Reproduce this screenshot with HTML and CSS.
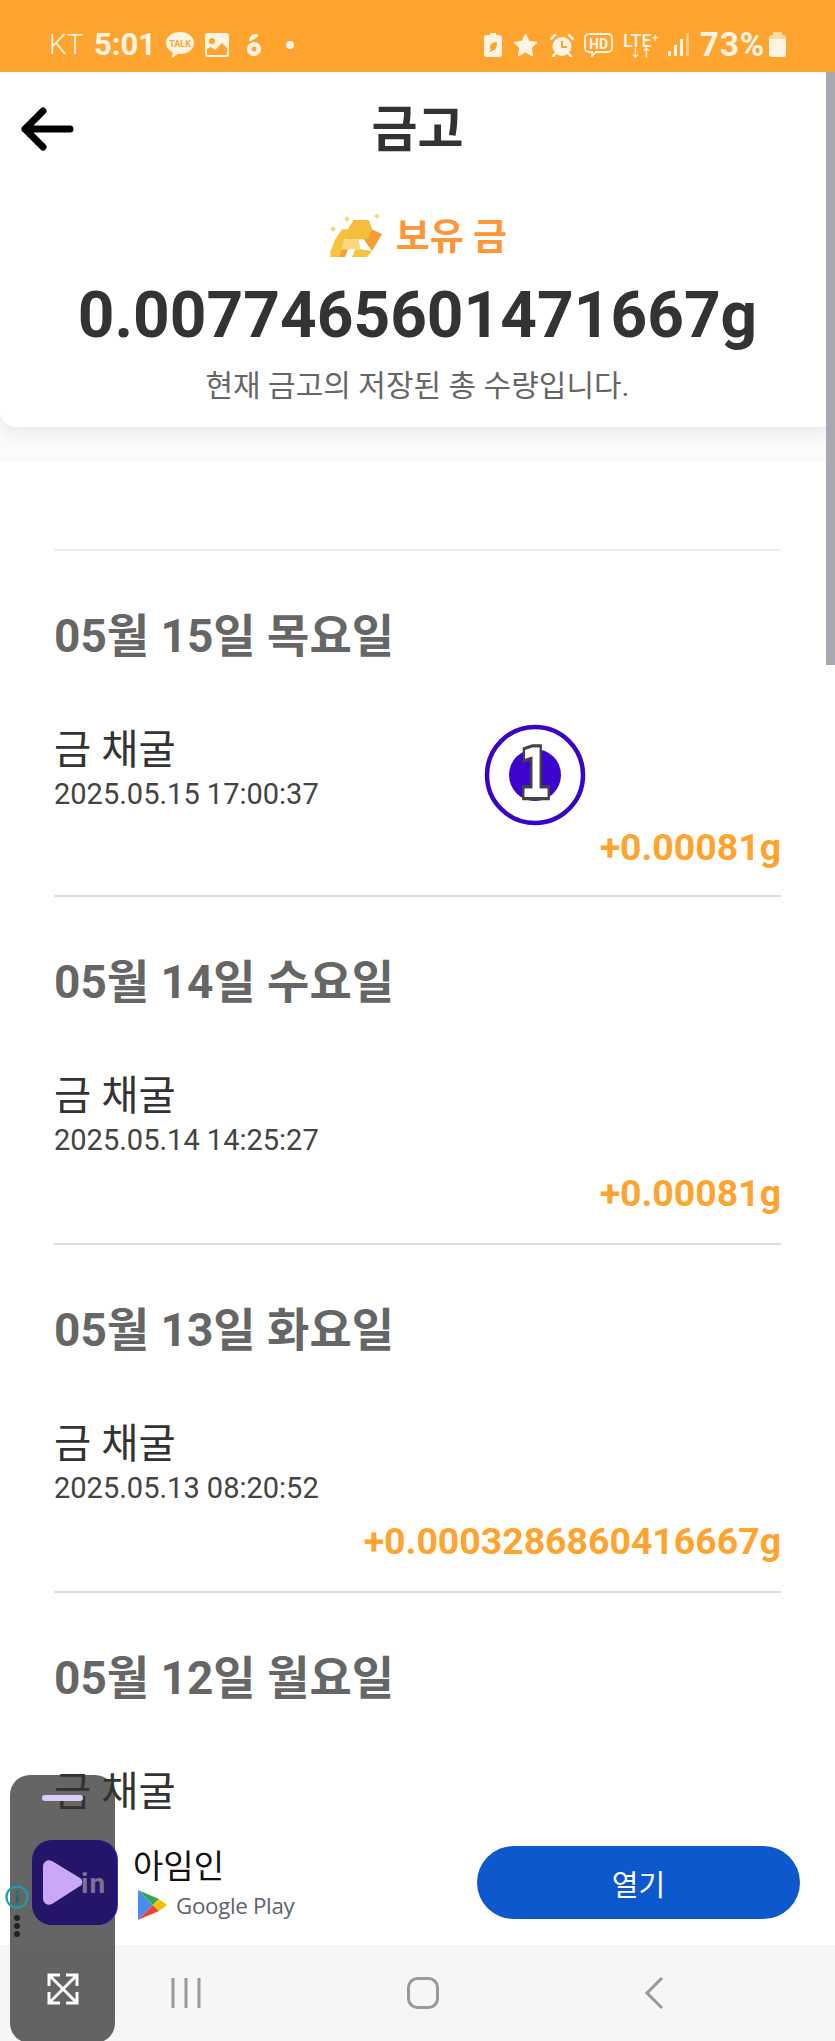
FILE: index.html
```html
<!DOCTYPE html>
<html lang="ko">
<head>
<meta charset="utf-8">
<title>금고</title>
<link rel="stylesheet" href="styles.css">
</head>
<body>
<div class="screen">
  <div class="status">
    <div class="status-left">
      <span class="carrier">KT</span>
      <span class="clock">5:01</span>
      <svg class="ic-talk" width="30" height="28" viewBox="0 0 30 28"><path class="st" d="M15 1C7 1 1 5.700 1 12c0 4 2.600 7.400 6.500 9.300L7 27l6-4.100c.7.100 1.300.100 2 .100 8 0 14-4.700 14-11S23 1 15 1z"/><text class="talk-t" x="15" y="15.500" text-anchor="middle">TALK</text></svg>
      <svg class="ic-img" width="24" height="24" viewBox="0 0 24 24"><path class="st" fill-rule="evenodd" d="M3 0h18a3 3 0 0 1 3 3v18a3 3 0 0 1-3 3H3a3 3 0 0 1-3-3V3a3 3 0 0 1 3-3zM2 16v5a1 1 0 0 0 1 1h18a1 1 0 0 0 1-1v-6l-5-5-7 7-4-3zM7 5a3 3 0 1 0 0 6 3 3 0 0 0 0-6z"/></svg>
      <svg class="ic-drop" width="16" height="24" viewBox="0 0 16 24"><path class="st" fill-rule="evenodd" d="M8 9a7 7 0 1 1 0 14A7 7 0 0 1 8 9zm0 4.500a2.500 2.500 0 1 0 0 5 2.500 2.500 0 0 0 0-5z"/><path class="st" d="M3 7c.5-3 3-6 7-6 2 0 3 1.500 1.500 3L6 7.500C4.500 8.200 2.800 8.200 3 7z"/></svg>
      <span class="dot"></span>
    </div>
    <div class="status-right">
      <svg width="18" height="24" viewBox="0 0 18 24"><path class="st" fill-rule="evenodd" d="M6 0h6v2h3a3 3 0 0 1 3 3v16a3 3 0 0 1-3 3H3a3 3 0 0 1-3-3V5a3 3 0 0 1 3-3h3zM13 9c-4 0-7 2-7 5 0 1 .3 2 1 2.500L5 19h2l1-1.500c3 .5 5-2 5-8.500z"/></svg>
      <svg class="ic-star" width="25" height="24" viewBox="0 0 25 24"><path class="st" stroke="#fff4e4" stroke-width="1.500" stroke-linejoin="round" d="M12.500 1.500l3.300 7 7.700 1-5.600 5.300 1.400 7.700-6.800-3.800-6.800 3.800 1.400-7.700L1.500 9.500l7.700-1z"/></svg>
      <svg class="ic-alarm" width="24" height="24" viewBox="0 0 24 24"><path class="st" fill-rule="evenodd" d="M12 4a9.500 9.500 0 1 1 0 19 9.500 9.500 0 0 1 0-19zm-1 4v7h6v-2h-4V8z"/><path class="ln" d="M1 6l4-4M23 6l-4-4M5 21l-2 2.500M19 21l2 2.500"/></svg>
      <svg class="ic-hd" width="29" height="24" viewBox="0 0 29 24"><path class="ln thin" d="M5 1h19a4 4 0 0 1 4 4v10a4 4 0 0 1-4 4H12l-4 4v-4H5a4 4 0 0 1-4-4V5a4 4 0 0 1 4-4z"/><text class="hd-t" x="14.500" y="15.500" text-anchor="middle">HD</text></svg>
      <div class="lte">
        <span class="lte-t">LTE⁺</span>
        <span class="lte-a">↓↑</span>
      </div>
      <div class="signal"><i class="b1"></i><i class="b2"></i><i class="b3"></i><i class="b4"></i></div>
      <span class="pct">73%</span>
      <span class="batt"></span>
    </div>
  </div>

  <header class="topbar">
    <svg class="back" width="54" height="46" viewBox="0 0 54 46"><path d="M5 23h45M23 5L5 23l18 18" fill="none" stroke="#000" stroke-width="7" stroke-linecap="round" stroke-linejoin="round"/></svg>
    <h1 class="title">금고</h1>
    <div class="bar-slot"></div>
  </header>

  <main class="content">
    <section class="card">
      <div class="card-label">
        <svg class="gold" width="56" height="46" viewBox="0 0 56 46">
          <path d="M19 1q.6 3.400 3.500 4-2.900.6-3.500 4-.6-3.400-3.500-4 2.900-.6 3.500-4z" fill="#f9d478"/>
          <path d="M49 -2q.6 3.400 3.500 4-2.900.6-3.500 4-.6-3.400-3.500-4 2.900-.6 3.500-4z" fill="#f9d478"/>
          <path d="M5 11q.6 3.400 3.500 4-2.900.6-3.500 4-.6-3.400-3.500-4 2.900-.6 3.500-4z" fill="#f9d478"/>
          <path d="M35.700 25.300L40.700 6 44 15.300 54 20.300 44 37z" fill="#f2a032"/>
          <path d="M20.700 13.700L25.700 6H40.700L44 15.300 39 25.300H17.300z" fill="#f7bd3a"/>
          <path d="M14 15.300H24L17.300 25.300 12.300 35.300 1.700 39.300 7.300 25.300z" fill="#f9c03e"/>
          <path d="M15.700 25.300H30.700L32.300 35.300H14z" fill="#fad97c"/>
          <path d="M7.300 25.300H15.700L14 35.300 10.700 43H1.700z" fill="#f9c23f"/>
          <path d="M14 35.300H20L17 43H10.700z" fill="#f2a032"/>
          <path d="M32.300 35.300L44 37 39 43H24L27.300 35.300z" fill="#f9c23f"/>
        </svg>
        <span class="label-text">보유 금</span>
      </div>
      <div class="amount-total">0.0077465601471667g</div>
      <p class="card-note">현재 금고의 저장된 총 수량입니다.</p>
    </section>

    <section class="ledger">
      <article class="day first-line">
        <h2 class="day-title">05월 15일 목요일</h2>
        <div class="item-name">금 채굴</div>
        <div class="item-time">2025.05.15 17:00:37</div>
        <div class="item-amount">+0.00081g</div>
      </article>
      <article class="day">
        <h2 class="day-title">05월 14일 수요일</h2>
        <div class="item-name">금 채굴</div>
        <div class="item-time">2025.05.14 14:25:27</div>
        <div class="item-amount">+0.00081g</div>
      </article>
      <article class="day">
        <h2 class="day-title">05월 13일 화요일</h2>
        <div class="item-name">금 채굴</div>
        <div class="item-time">2025.05.13 08:20:52</div>
        <div class="item-amount">+0.0003286860416667g</div>
      </article>
      <article class="day">
        <h2 class="day-title">05월 12일 월요일</h2>
        <div class="item-name">금 채굴</div>
      </article>
    </section>
  </main>

  <aside class="ad">
    <div class="ad-logo">
      <svg width="85" height="85" viewBox="0 0 85 85"><text class="ad-in" x="49" y="53">in</text><path d="M11 27c0-6 5-8 9-6l28 17c3 2 3 6 0 8L20 64c-4 2-9 0-9-6z" fill="#c9a9f7"/></svg>
    </div>
    <div class="ad-info">
      <div class="ad-name">아임인</div>
      <div class="ad-store">
        <svg width="30" height="32" viewBox="0 0 30 32">
          <path d="M1 1v30l15-15z" fill="#4a8df0"/>
          <path d="M1 1l15 15 6-6z" fill="#35a853"/>
          <path d="M1 31l15-15 6 6z" fill="#ea4335"/>
          <path d="M22 10l8 6-8 6-6-6z" fill="#fbbc04"/>
        </svg>
        <span class="store-name">Google Play</span>
      </div>
    </div>
    <button class="ad-open">열기</button>
  </aside>

  <nav class="softkeys">
    <svg width="30" height="32" viewBox="0 0 30 32"><path d="M2 1v30M15 1v30M28 1v30" stroke="#999" stroke-width="3" fill="none"/></svg>
    <svg width="32" height="32" viewBox="0 0 32 32"><rect x="1.500" y="1.500" width="29" height="29" rx="9" fill="none" stroke="#999" stroke-width="3"/></svg>
    <svg width="20" height="34" viewBox="0 0 20 34"><path d="M18 2L3 17l15 15" fill="none" stroke="#999" stroke-width="3"/></svg>
  </nav>

  <div class="scrollbar"></div>

  <div class="coin">
    <svg width="102" height="102" viewBox="0 0 102 102"><circle cx="51" cy="51" r="48" fill="#fff" stroke="#3a04c4" stroke-width="4.500"/><circle cx="51" cy="51" r="26" fill="#3d04cf"/><text class="coin-t" transform="translate(51 73) scale(.8 1.08)" text-anchor="middle">1</text></svg>
  </div>

  <div class="widget">
    <span class="pill"></span>
    <svg class="expand" width="32" height="32" viewBox="0 0 32 32"><path d="M3 3l26 26M29 3L3 29M2 13V2h11M19 2h11v11M30 19v11H19M13 30H2V19" fill="none" stroke="#fff" stroke-width="3"/></svg>
  </div>
  <svg class="info" width="24" height="24" viewBox="0 0 24 24"><circle cx="12" cy="12" r="10.500" fill="none" stroke="#1a9fae" stroke-width="2.200"/><path d="M12 10v8M12 6v2.500" stroke="#146f7c" stroke-width="2.800"/></svg>
  <div class="dots"><i></i><i></i><i></i></div>
</div>
</body>
</html>
```
FILE: styles.css
```css
* { box-sizing: border-box; }
html, body { margin: 0; padding: 0; background: #fff; }
body { font-family: Roboto, "Noto Sans CJK KR", sans-serif; color: #333; }

.screen {
  position: relative;
  width: 835px;
  height: 2041px;
  overflow: hidden;
  display: flex;
  flex-direction: column;
}

/* status bar */
.status {
  height: 72px;
  flex: none;
  background: #ffa42e;
  color: #fff4e4;
  display: flex;
  justify-content: space-between;
  align-items: center;
  padding: 17px 49px 0 49px;
}
.status-left, .status-right { display: flex; align-items: center; }
.st { fill: #fff4e4; }
.ln { fill: none; stroke: #fff4e4; stroke-width: 2.500; stroke-linecap: round; }
.ln.thin { stroke-width: 1.800; }
.carrier { font-size: 28px; font-weight: 300; width: 45px; }
.clock { font-size: 31px; font-weight: 700; width: 71px; }
.ic-img { margin-left: 10px; }
.ic-drop { margin-left: 17px; }
.dot { width: 8px; height: 8px; border-radius: 50%; background: #fff4e4; margin-left: 24px; }
.talk-t { font: 700 9px Roboto, sans-serif; fill: #ffa42e; }
.hd-t { font: 700 14px Roboto, sans-serif; fill: #fff4e4; }
.ic-star { margin-left: 11px; }
.ic-alarm { margin-left: 12px; }
.ic-hd { margin-left: 10px; }
.lte { margin-left: 9px; width: 38px; display: flex; flex-direction: column; align-items: center; }
.lte-t { font-size: 18px; line-height: 17px; font-weight: 500; }
.lte-a { font-size: 11px; line-height: 9px; font-weight: 700; }
.signal { margin-left: 8px; display: flex; align-items: flex-end; gap: 3px; height: 23px; }
.signal i { display: block; width: 3px; background: #fff4e4; }
.signal .b1 { height: 5px; }
.signal .b2 { height: 11px; }
.signal .b3 { height: 17px; }
.signal .b4 { height: 23px; opacity: .45; }
.pct { margin-left: 11px; font-size: 33px; font-weight: 700; letter-spacing: 1px; width: 69px; white-space: nowrap; }
.batt {
  width: 17px;
  height: 22px;
  margin-top: 2px;
  border-radius: 3px;
  background: linear-gradient(#ffd9a3 0 20%, #fff4e4 20%);
  position: relative;
}
.batt::before {
  content: "";
  position: absolute;
  left: 4px;
  top: -3px;
  width: 9px;
  height: 3px;
  background: #ffd9a3;
}

/* title bar */
.topbar {
  height: 116px;
  flex: none;
  background: #fff;
  display: flex;
  align-items: center;
  justify-content: space-between;
  padding: 0 4px 0 20px;
  box-shadow: 0 2px 4px rgba(0, 0, 0, .1);
  position: relative;
  z-index: 1;
}
.back { flex: none; margin-top: -2px; }
.title { margin: 0 0 0 -16px; font-size: 50px; font-weight: 700; line-height: 1; color: #333; }
.bar-slot { width: 54px; }

/* content */
.content { flex: 1; min-height: 0; overflow: hidden; position: relative; background: #fbfbfb; }

.card {
  height: 239px;
  background: #fff;
  border-radius: 0 0 16px 16px;
  box-shadow: 0 6px 18px rgba(0, 0, 0, .08);
  display: flex;
  flex-direction: column;
  align-items: center;
  padding-top: 24px;
  position: relative;
  z-index: 1;
}
.card-label { display: flex; align-items: center; gap: 12px; height: 50px; }
.label-text { font-size: 37px; font-weight: 700; color: #ff9638; line-height: 1; }
.amount-total { font-size: 64px; font-weight: 700; line-height: 74px; margin-top: 17px; color: #333; }
.card-note { margin: 14px 0 0; font-size: 30px; line-height: 38px; color: #666; }

.ledger { margin-top: 35px; background: #fff; padding: 87px 54px 0; }
.first-line { border-top: 2px solid #eee; }
.day { border-bottom: 2px solid #ddd; padding: 55px 0 0; height: 348px; }
.day-title { margin: 0; font-size: 46px; line-height: 60px; font-weight: 700; color: #666; }
.item-name { margin-top: 57px; font-size: 40.500px; line-height: 54px; color: #333; }
.item-time { font-size: 29px; line-height: 34px; color: #444; }
.item-amount { margin-top: 14px; text-align: right; font-size: 37.400px; line-height: 44px; font-weight: 700; color: #ffa42e; }

.scrollbar {
  position: absolute;
  top: 72px;
  right: 0;
  width: 9px;
  height: 593px;
  background: #a8a8ae;
  z-index: 2;
}

/* ad */
.ad {
  height: 130px;
  flex: none;
  background: #fff;
  display: flex;
  align-items: center;
  padding: 0 35px 0 32px;
  position: relative;
}
.ad-logo {
  width: 85px;
  height: 85px;
  border-radius: 20px;
  background: #24146a;
  box-shadow: 1px 0 0 #4030d0;
  position: relative;
  z-index: 3;
  overflow: hidden;
  margin-top: 4px;
}
.ad-logo svg { display: block; }
.ad-in { font: 700 28px Roboto, sans-serif; fill: #7d7390; letter-spacing: 1px; }
.ad-info { margin: 7px 0 0 16px; flex: 1; }
.ad-name { font-size: 33px; line-height: 42px; color: #111; }
.ad-store { display: flex; align-items: center; gap: 9px; margin-top: 1px; margin-left: 4px; }
.store-name { font-family: "Open Sans", sans-serif; font-size: 22.300px; color: #5f6368; letter-spacing: -.3px; }
.ad-open {
  width: 323px;
  height: 73px;
  margin-top: 5px;
  border: 0;
  border-radius: 37px;
  background: #0d58cc;
  color: #fff;
  font: 400 29px Roboto, "Noto Sans CJK KR", sans-serif;
}

/* soft keys */
.softkeys {
  height: 96px;
  flex: none;
  background: #f5f6f8;
  display: flex;
  align-items: center;
  padding: 0 171px;
  justify-content: space-between;
}

/* overlays */
.coin { position: absolute; left: 484px; top: 724px; }
.coin svg { display: block; }
.coin-t {
  font: 700 62px "DejaVu Sans Mono", monospace;
  fill: #fff;
  stroke: #444;
  stroke-width: 6px;
  paint-order: stroke;
}
.widget {
  position: absolute;
  left: 10px;
  top: 1775px;
  width: 105px;
  height: 268px;
  border-radius: 20px;
  background: rgba(50, 50, 50, .75);
  z-index: 2;
}
.pill {
  position: absolute;
  left: 32px;
  top: 20px;
  width: 41px;
  height: 6px;
  border-radius: 3px;
  background: #dccbf7;
}
.expand { position: absolute; left: 37px; top: 198px; }
.info { position: absolute; left: 5px; top: 1885px; z-index: 3; }
.dots {
  position: absolute;
  left: 14px;
  top: 1915px;
  display: flex;
  flex-direction: column;
  gap: 2px;
  z-index: 3;
}
.dots i { display: block; width: 6px; height: 6px; border-radius: 50%; background: #222; }
```
